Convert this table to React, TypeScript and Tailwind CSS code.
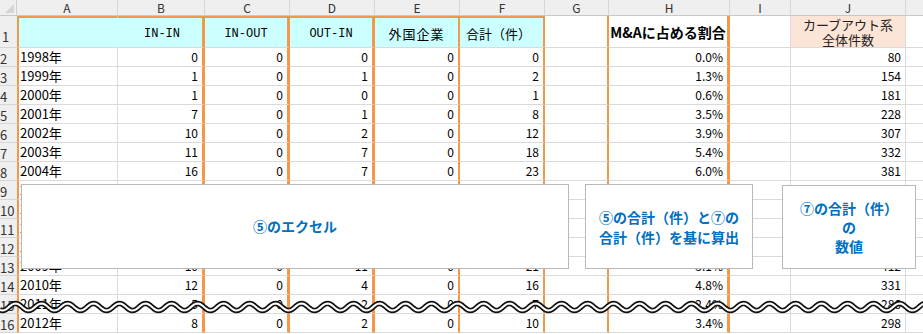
const OR = 'border-r-[#f79646]';

type Row = {
  n: number;
  year: string;
  b: number | string;
  c: number | string;
  d: number | string;
  e: number | string;
  f: number | string;
  h: string;
  j: number | string;
};

// rows 9-12 sit under the callouts, so only the year column keeps its text
const rows: Row[] = [
  { n: 2, year: '1998年', b: 0, c: 0, d: 0, e: 0, f: 0, h: '0.0%', j: 80 },
  { n: 3, year: '1999年', b: 1, c: 0, d: 1, e: 0, f: 2, h: '1.3%', j: 154 },
  { n: 4, year: '2000年', b: 1, c: 0, d: 0, e: 0, f: 1, h: '0.6%', j: 181 },
  { n: 5, year: '2001年', b: 7, c: 0, d: 1, e: 0, f: 8, h: '3.5%', j: 228 },
  { n: 6, year: '2002年', b: 10, c: 0, d: 2, e: 0, f: 12, h: '3.9%', j: 307 },
  { n: 7, year: '2003年', b: 11, c: 0, d: 7, e: 0, f: 18, h: '5.4%', j: 332 },
  { n: 8, year: '2004年', b: 16, c: 0, d: 7, e: 0, f: 23, h: '6.0%', j: 381 },
  { n: 9, year: '2005年', b: '', c: '', d: '', e: '', f: '', h: '', j: '' },
  { n: 10, year: '2006年', b: '', c: '', d: '', e: '', f: '', h: '', j: '' },
  { n: 11, year: '2007年', b: '', c: '', d: '', e: '', f: '', h: '', j: '' },
  { n: 12, year: '2008年', b: '', c: '', d: '', e: '', f: '', h: '', j: '' },
  { n: 13, year: '2009年', b: 10, c: 0, d: 11, e: 0, f: 21, h: '5.1%', j: 412 },
  { n: 14, year: '2010年', b: 12, c: 0, d: 4, e: 0, f: 16, h: '4.8%', j: 331 },
  { n: 15, year: '2011年', b: 5, c: 0, d: 2, e: 0, f: 7, h: '2.4%', j: 286 },
  { n: 16, year: '2012年', b: 8, c: 0, d: 2, e: 0, f: 10, h: '3.4%', j: 298 },
];

const letters: [string, string][] = [
  ['A', 'w-[101px]'],
  ['B', 'w-[87px]'],
  ['C', 'w-[85px]'],
  ['D', 'w-[85px]'],
  ['E', 'w-[85px]'],
  ['F', 'w-[85px]'],
  ['G', 'w-[64px]'],
  ['H', 'w-[121px]'],
  ['I', 'w-[61px]'],
  ['J', 'w-[115px]'],
];

function wavePath() {
  let d = '';
  for (let x = 0; x <= 930; x += 2) {
    const y = 9 + 3.6 * Math.sin(((x + 4) / 26) * Math.PI * 2);
    d += (x === 0 ? 'M' : 'L') + x + ' ' + y.toFixed(2) + ' ';
  }
  return d;
}

function Num({ v, w, edge }: { v: string | number; w: string; edge: string }) {
  return (
    <div
      className={`${w} ${edge} shrink-0 border-b border-b-[#dadada] flex items-center justify-end pr-[4px] text-[12px] text-black`}
    >
      {v}
    </div>
  );
}

function DataRow({ r }: { r: Row }) {
  return (
    <div className="flex h-[19px]">
      <div className="w-[17px] shrink-0 bg-[#efefef] border-b border-b-[#d6d6d6] text-[13px] leading-[19px] text-[#333] pt-[1px] overflow-hidden whitespace-nowrap">
        {r.n}
      </div>
      <div className="w-[101px] shrink-0 border-l-2 border-l-[#f79646] border-r border-r-[#dadada] border-b border-b-[#dadada] flex items-center pl-[1px] text-[13px] text-black whitespace-nowrap">
        {r.year}
      </div>
      <Num v={r.b} w="w-[87px]" edge={`border-r-[3px] ${OR}`} />
      <Num v={r.c} w="w-[85px]" edge={`border-r-[3px] ${OR}`} />
      <Num v={r.d} w="w-[85px]" edge={`border-r-[3px] ${OR}`} />
      <Num v={r.e} w="w-[85px]" edge={`border-r-[2px] ${OR}`} />
      <Num v={r.f} w="w-[85px]" edge={`border-r-[2px] ${OR}`} />
      <Num v="" w="w-[64px]" edge={`border-r-[2px] ${OR}`} />
      <Num v={r.h} w="w-[121px]" edge={`border-r-[3px] ${OR}`} />
      <Num v="" w="w-[61px]" edge="border-r border-r-[#dadada]" />
      <Num v={r.j} w="w-[115px]" edge="border-r border-r-[#dadada]" />
      <div className="flex-1 border-b border-b-[#dadada]" />
    </div>
  );
}

export default function App() {
  const head = 'shrink-0 h-[32px] border-b border-b-[#dadada] border-t-2 border-t-[#f79646] bg-[#ccffff] flex items-center justify-center pt-[2px]';
  return (
    <div className="relative w-[923px] h-[334px] overflow-hidden bg-white font-['Noto_Sans_CJK_JP',sans-serif]">
      {/* column letters */}
      <div className="flex h-[16px] bg-[#efefef] border-b border-b-[#c8c8c8]">
        <div className="w-[17px] shrink-0 border-r border-r-[#d0d0d0] relative">
          <svg className="absolute right-[2px] bottom-[2px]" width="9" height="9" viewBox="0 0 9 9">
            <polygon points="9,0 9,9 0,9" fill="#d4d4d4" />
          </svg>
        </div>
        {letters.map(([l, w]) => (
          <div
            key={l}
            className={`${w} shrink-0 border-r border-r-[#d6d6d6] flex items-center justify-center text-[12px] leading-none text-[#333]`}
          >
            {l}
          </div>
        ))}
        <div className="flex-1" />
      </div>

      {/* row 1 */}
      <div className="flex h-[32px]">
        <div className="w-[17px] shrink-0 bg-[#efefef] border-b border-b-[#d6d6d6] text-[13px] text-[#333] flex items-end pb-[1px] pl-[2px]">
          1
        </div>
        <div className={`w-[101px] ${head} border-l-2 border-l-[#f79646] border-r border-r-[#ccffff]`} />
        <div className={`w-[87px] ${head} border-r-[3px] ${OR} font-['Liberation_Mono',monospace] text-[12px] pl-[4px]`}>
          IN-IN
        </div>
        <div className={`w-[85px] ${head} border-r-[3px] ${OR} font-['Liberation_Mono',monospace] text-[12px]`}>
          IN-OUT
        </div>
        <div className={`w-[85px] ${head} border-r-[3px] ${OR} font-['Liberation_Mono',monospace] text-[12px]`}>
          OUT-IN
        </div>
        <div className={`w-[85px] ${head} border-r-[2px] ${OR} text-[13px] tracking-[1px]`}>
          外国企業
        </div>
        <div className={`w-[85px] ${head} border-r-[2px] ${OR} text-[13px] justify-start pl-[6px]`}>
          合計（件）
        </div>
        <div className={`w-[64px] shrink-0 border-b border-b-[#dadada] border-r-[2px] ${OR}`} />
        <div className={`w-[121px] shrink-0 border-b border-b-[#dadada] border-r-[3px] ${OR} flex items-center justify-center pt-[2px] text-[14px] font-bold text-black whitespace-nowrap`}>
          M&amp;Aに占める割合
        </div>
        <div className="w-[61px] shrink-0 border-b border-b-[#dadada] border-r border-r-[#dadada]" />
        <div className="w-[115px] shrink-0 bg-[#fce4d6] border-b border-b-[#dadada] border-r border-r-[#dadada] flex flex-col items-center justify-center text-[13px] leading-[15px] text-[#222]">
          <span>カーブアウト系</span>
          <span>全体件数</span>
        </div>
        <div className="flex-1 border-b border-b-[#dadada]" />
      </div>

      {rows.map((r) => (
        <DataRow key={r.n} r={r} />
      ))}

      {/* callouts */}
      <div className="absolute left-[21px] top-[184px] w-[548px] h-[85px] bg-white border border-[#b8b8b8] flex items-center justify-center text-[14px] font-bold text-[#0070c0]">
        ⑤のエクセル
      </div>
      <div className="absolute left-[585px] top-[184px] w-[168px] h-[85px] bg-white border border-[#b8b8b8] flex flex-col items-center justify-center text-[14px] leading-[20px] font-bold text-[#0070c0] whitespace-nowrap">
        <span>⑤の合計（件）と⑦の</span>
        <span>合計（件）を基に算出</span>
      </div>
      <div className="absolute left-[782px] top-[185px] w-[134px] h-[84px] bg-white border border-[#b8b8b8] flex flex-col items-center justify-center text-[14px] leading-[19px] font-bold text-[#0070c0] whitespace-nowrap">
        <span>⑦の合計（件）</span>
        <span>の</span>
        <span>数値</span>
      </div>

      {/* break wave */}
      <svg className="absolute left-0 top-[298px]" width="923" height="18" viewBox="0 0 923 18">
        <path d={wavePath()} fill="none" stroke="#111" strokeWidth="5.5" />
        <path d={wavePath()} fill="none" stroke="#fff" strokeWidth="2" />
      </svg>
    </div>
  );
}
